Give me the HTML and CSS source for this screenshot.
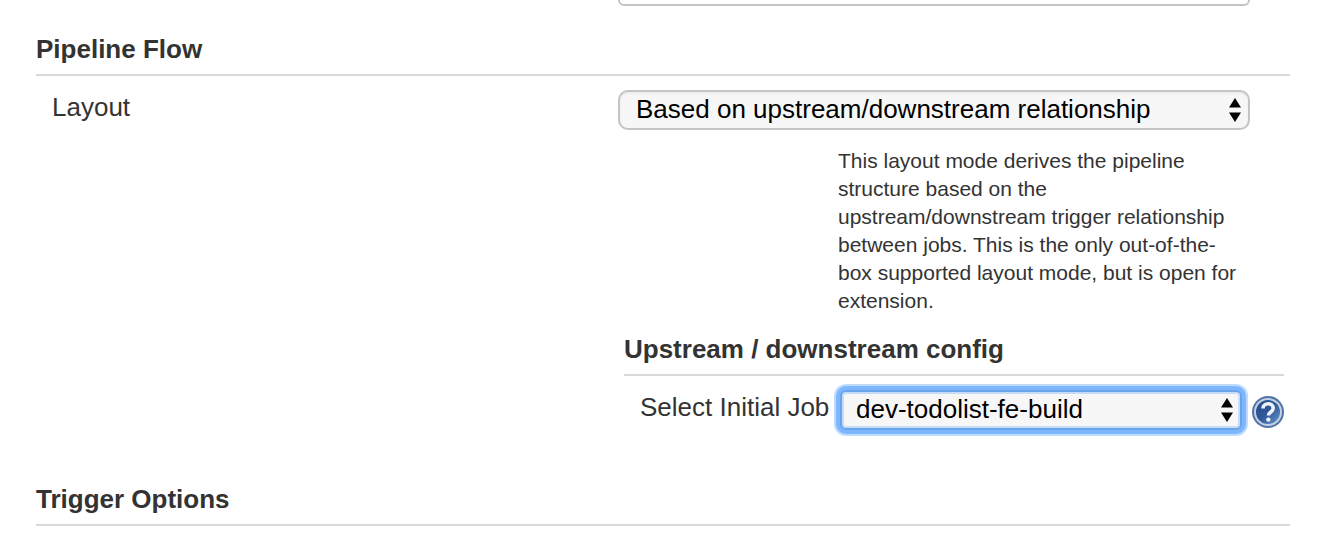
FILE: index.html
```
<!DOCTYPE html>
<html lang="en">
<head>
<meta charset="utf-8">
<title>Pipeline configuration</title>
<link rel="stylesheet" href="styles.css">
</head>
<body>
<form class="config">
  <div class="row row-first">
    <input class="text-input" type="text" aria-label="Title">
  </div>

  <section class="section">
    <h2 class="heading">Pipeline Flow</h2>
    <div class="row">
      <label class="label" for="layout">Layout</label>
      <div class="field">
        <div class="picker">
          <select class="select" id="layout" aria-describedby="layout-help">
            <option>Based on upstream/downstream relationship</option>
          </select>
          <svg class="arrows" viewBox="0 0 12 24" aria-hidden="true"><path d="M6 0l6 9.500H0zM6 24l6-9.500H0z"/></svg>
        </div>
        <p class="help" id="layout-help">This layout mode derives the pipeline structure based on the upstream/downstream trigger relationship between jobs. This is the only out-of-the-box supported layout mode, but is open for extension.</p>
      </div>
    </div>

    <div class="nested">
      <div class="nested-body">
        <h3 class="heading">Upstream / downstream config</h3>
        <div class="job-row">
          <label class="label" for="job">Select Initial Job</label>
          <div class="picker">
            <select class="select select-focused" id="job">
              <option>dev-todolist-fe-build</option>
            </select>
            <svg class="arrows" viewBox="0 0 12 24" aria-hidden="true"><path d="M6 0l6 9.500H0zM6 24l6-9.500H0z"/></svg>
          </div>
          <button class="help-button" type="button" aria-label="Help for Select Initial Job">
            <svg class="help-icon" viewBox="0 0 32 32" aria-hidden="true">
              <defs>
                <linearGradient id="disc" x1="0" y1="0" x2="1" y2="1">
                  <stop offset="0" stop-color="#244a87"/>
                  <stop offset="0.500" stop-color="#30599a"/>
                  <stop offset="1" stop-color="#6f9bcf"/>
                </linearGradient>
              </defs>
              <circle cx="16" cy="16" r="16" fill="#5074a6"/>
              <circle cx="16" cy="16" r="13" fill="url(#disc)" stroke="#c3d0e2" stroke-width="2"/>
              <path d="M11 12.500C11 9.500 13.200 7.800 16.200 7.800s5 1.700 5 4.500c0 3.700-4.700 3.700-4.700 7.200" fill="none" stroke="#eef3f9" stroke-width="3.600"/>
              <circle cx="16.400" cy="23.600" r="2.200" fill="#eef3f9"/>
            </svg>
          </button>
        </div>
      </div>
    </div>
  </section>

  <section class="section section-trigger">
    <h2 class="heading">Trigger Options</h2>
  </section>
</form>
</body>
</html>
```
FILE: styles.css
```
* {
  box-sizing: border-box;
}

body {
  margin: 0;
  background: #fff;
  color: #333;
  font: 26px/34px "Liberation Sans", Arial, sans-serif;
}

.config {
  padding: 0 34px 12px 36px;
}

.row {
  display: grid;
  grid-template-columns: 582fr 632fr;
  padding-right: 40px;
}

/* The title field is scrolled mostly out of view. */
.row-first {
  margin-top: -34px;
}

.text-input {
  grid-column: 2;
  width: 100%;
  height: 40px;
  border: 2px solid #c4c4c4;
  border-radius: 6px;
  background: #fff;
  font: inherit;
}

.section {
  padding-top: 28px;
}

.section-trigger {
  padding-top: 54px;
}

.heading {
  margin: 0 0 14px;
  padding-bottom: 10px;
  border-bottom: 2px solid #d9d9d9;
  font-size: 26px;
  line-height: 30px;
}

.label {
  padding-left: 16px;
  white-space: nowrap;
}

.picker {
  position: relative;
}

.select {
  display: block;
  width: 100%;
  height: 40px;
  padding: 0 32px 2px 16px;
  appearance: none;
  border: 2px solid #c4c4c4;
  border-radius: 10px;
  background: #f7f7f7;
  box-shadow: inset 0 2px 2px #ececec;
  color: #000;
  font: inherit;
}

.select-focused {
  padding-left: 14px;
  border-color: #6aa4ea;
  border-radius: 6px;
  box-shadow: 0 0 0 4px #7eb7ff, 0 0 0 6px #bfdcff, inset 0 0 0 2px #c6dcf7;
}

.arrows {
  position: absolute;
  top: 8px;
  right: 9px;
  width: 12px;
  height: 24px;
  pointer-events: none;
}

.help {
  margin: 17px 12px 0 220px;
  font-size: 21px;
  line-height: 28px;
}

.nested {
  display: grid;
  grid-template-columns: 588fr 660fr;
  margin-top: 19px;
  padding-right: 6px;
}

.nested-body {
  grid-column: 2;
}

.job-row {
  display: grid;
  grid-template-columns: 216px 1fr 32px;
}

.job-row .picker {
  margin-right: 10px;
}

.help-button {
  width: 32px;
  height: 32px;
  margin-top: 6px;
  padding: 0;
  border: 0;
  background: none;
}

.help-icon {
  display: block;
  width: 32px;
  height: 32px;
}
```
